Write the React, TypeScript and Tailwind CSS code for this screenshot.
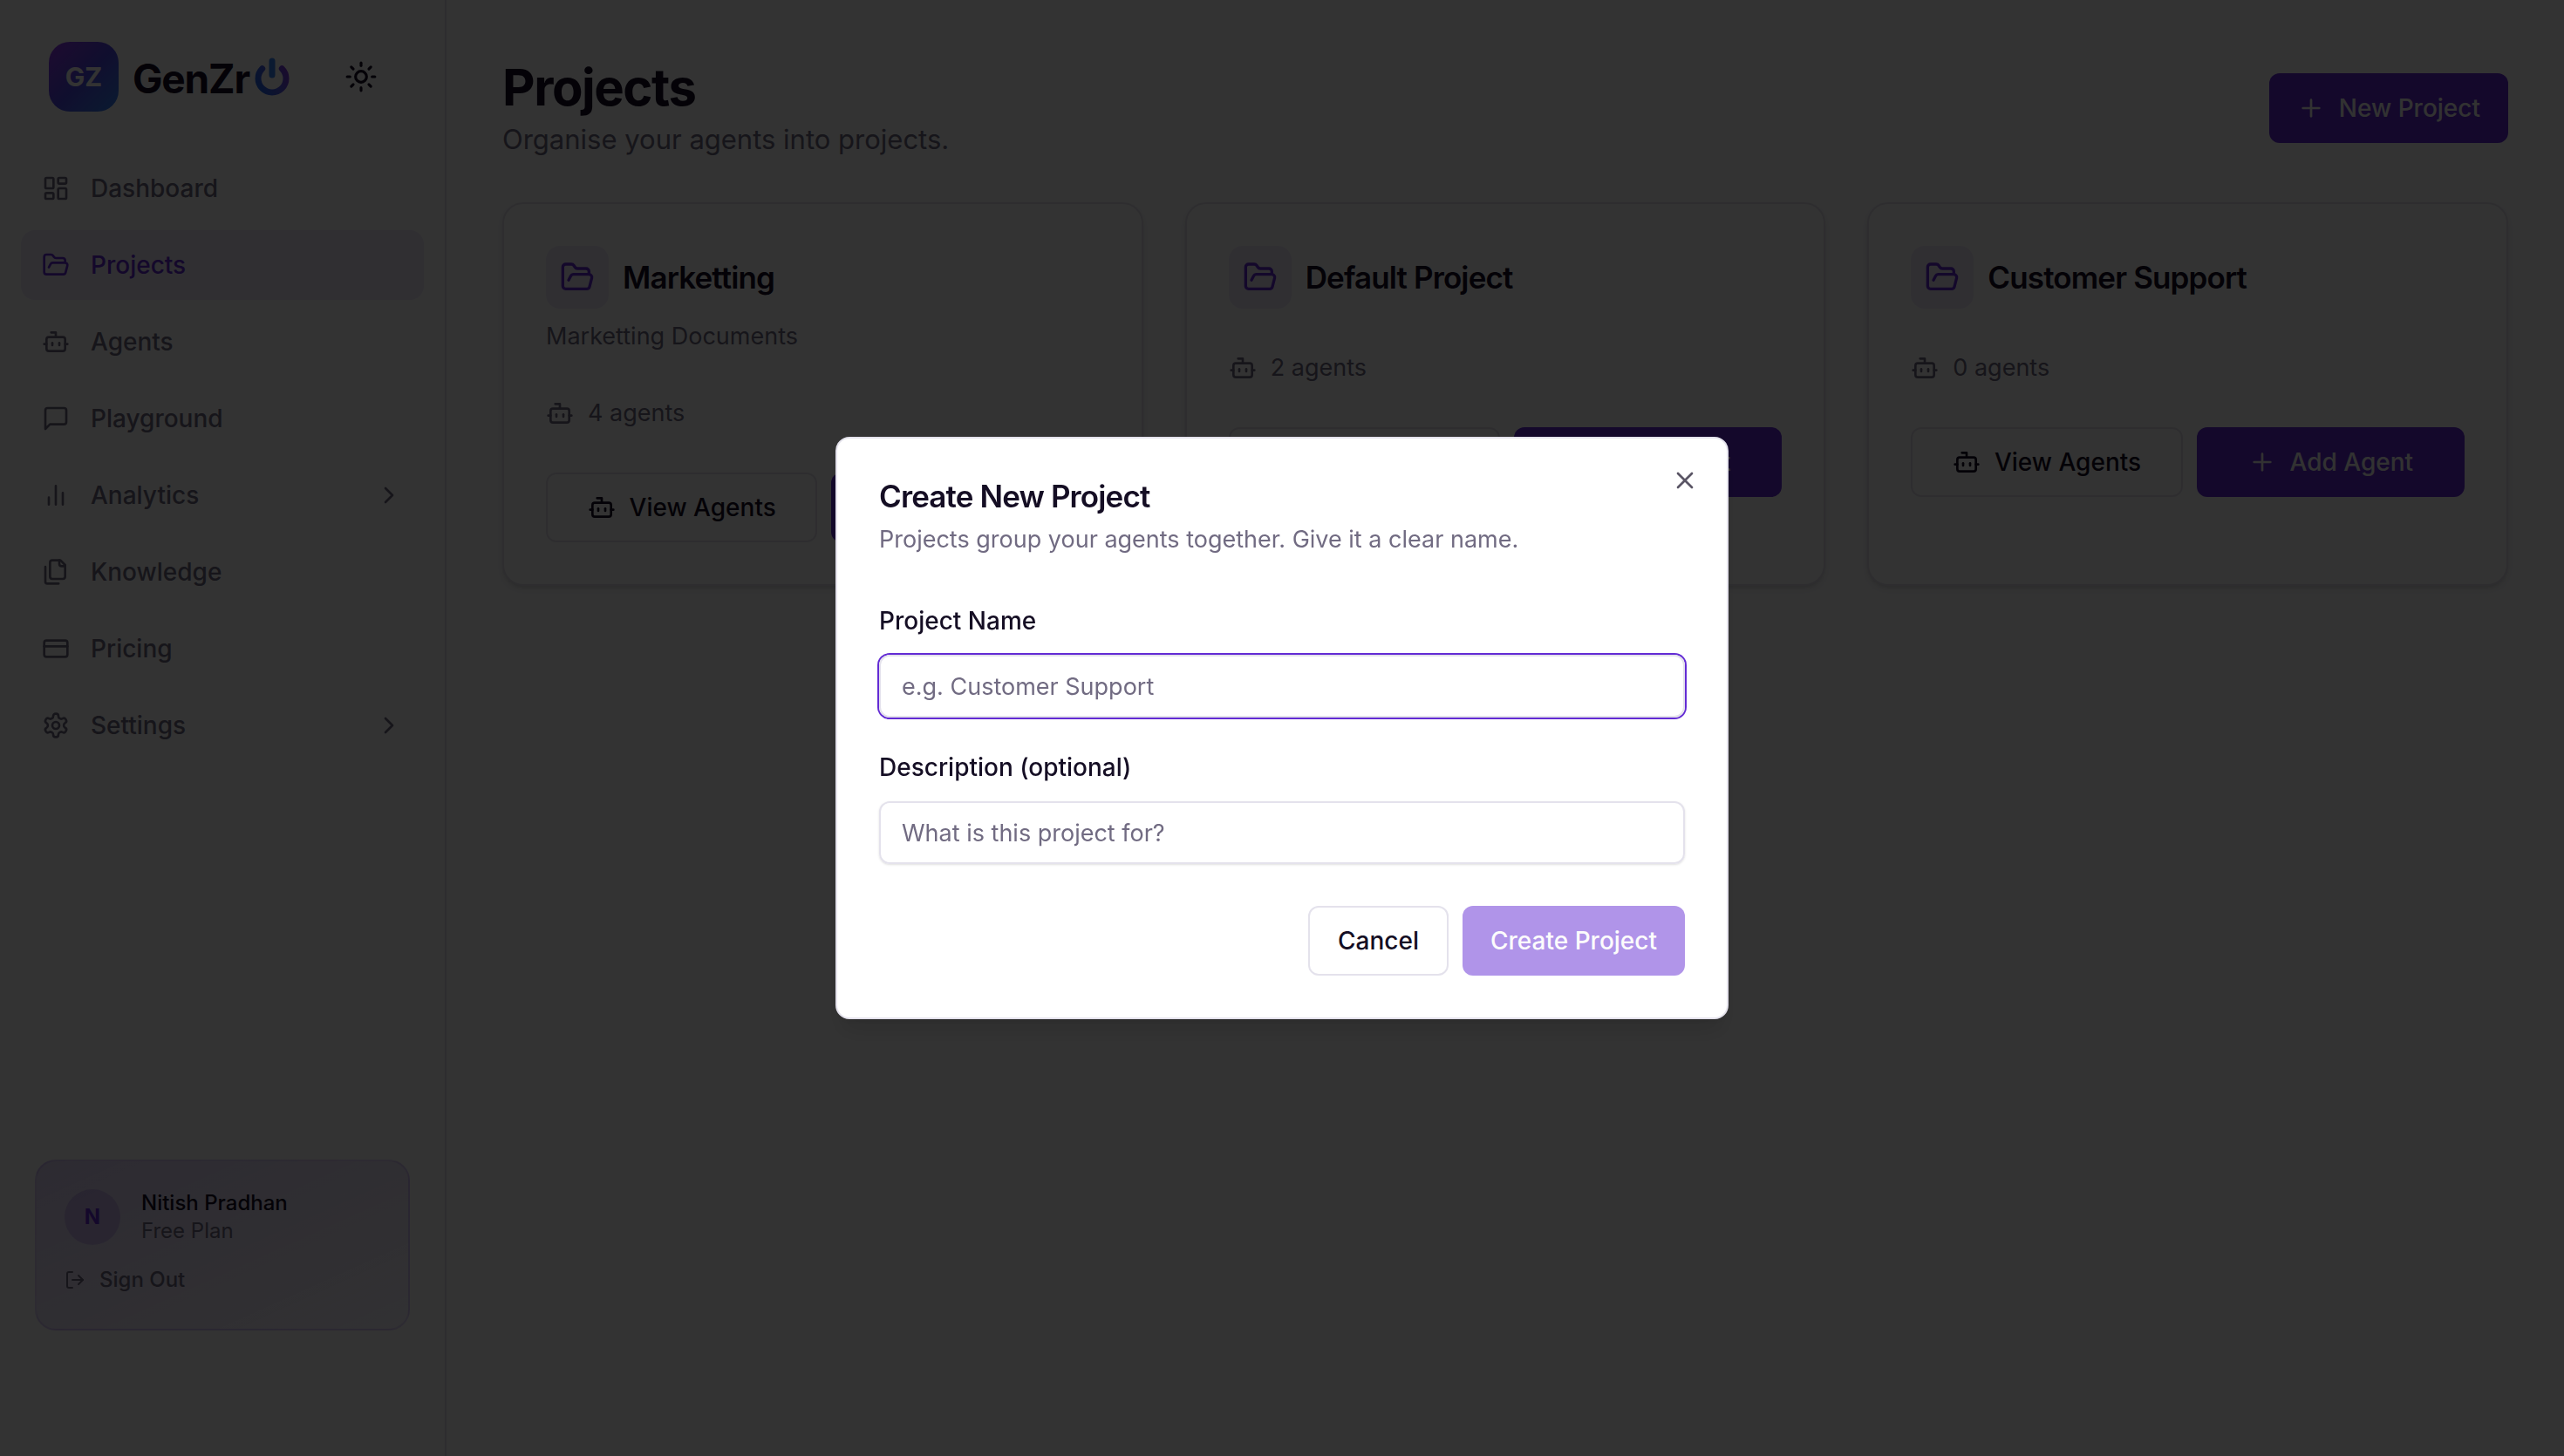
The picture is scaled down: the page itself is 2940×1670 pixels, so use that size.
import { useState } from 'react';
import type { ReactNode } from 'react';
import {
    Bot,
    ChevronRight,
    CreditCard,
    FolderOpen,
    LayoutDashboard,
    LogOut,
    Plus,
    Sun,
    X,
} from 'lucide-react';

const iconProps = {
    viewBox: '0 0 24 24',
    fill: 'none',
    stroke: 'currentColor',
    strokeWidth: 2,
    strokeLinecap: 'round' as const,
    strokeLinejoin: 'round' as const,
    'aria-hidden': true,
};

function ChatIcon({ className }: { className?: string }) {
    return (
        <svg {...iconProps} className={className}>
            <path d="M21 15a2 2 0 0 1-2 2H7l-4 4V5a2 2 0 0 1 2-2h14a2 2 0 0 1 2 2z" />
        </svg>
    );
}

function BarsIcon({ className }: { className?: string }) {
    return (
        <svg {...iconProps} className={className}>
            <path d="M18 20V10M12 20V4M6 20v-6" />
        </svg>
    );
}

function FilesIcon({ className }: { className?: string }) {
    return (
        <svg {...iconProps} className={className}>
            <path d="M20 7h-3a2 2 0 0 1-2-2V2" />
            <path d="M9 18a2 2 0 0 1-2-2V4a2 2 0 0 1 2-2h7l4 4v10a2 2 0 0 1-2 2Z" />
            <path d="M3 7.6v12.8A1.6 1.6 0 0 0 4.6 22h9.8" />
        </svg>
    );
}

function GearIcon({ className }: { className?: string }) {
    return (
        <svg {...iconProps} className={className}>
            <path d="M12.22 2h-.44a2 2 0 0 0-2 2v.18a2 2 0 0 1-1 1.73l-.43.25a2 2 0 0 1-2 0l-.15-.08a2 2 0 0 0-2.73.73l-.22.38a2 2 0 0 0 .73 2.73l.15.1a2 2 0 0 1 1 1.72v.51a2 2 0 0 1-1 1.74l-.15.09a2 2 0 0 0-.73 2.73l.22.38a2 2 0 0 0 2.73.73l.15-.08a2 2 0 0 1 2 0l.43.25a2 2 0 0 1 1 1.73V20a2 2 0 0 0 2 2h.44a2 2 0 0 0 2-2v-.18a2 2 0 0 1 1-1.73l.43-.25a2 2 0 0 1 2 0l.15.08a2 2 0 0 0 2.73-.73l.22-.39a2 2 0 0 0-.73-2.73l-.15-.08a2 2 0 0 1-1-1.74v-.5a2 2 0 0 1 1-1.74l.15-.09a2 2 0 0 0 .73-2.73l-.22-.38a2 2 0 0 0-2.73-.73l-.15.08a2 2 0 0 1-2 0l-.43-.25a2 2 0 0 1-1-1.73V4a2 2 0 0 0-2-2z" />
            <circle cx="12" cy="12" r="3" />
        </svg>
    );
}

// The last "o" of the wordmark
function PowerMark() {
    return (
        <svg viewBox="0 0 40 44" fill="none" strokeWidth="7" strokeLinecap="round" className="h-11 w-10" aria-hidden>
            <defs>
                <linearGradient id="ring" x1="36" y1="14" x2="4" y2="30" gradientUnits="userSpaceOnUse">
                    <stop offset="0" stopColor="#7e3ae0" />
                    <stop offset="0.5" stopColor="#4f5ae5" />
                    <stop offset="1" stopColor="#2563eb" />
                </linearGradient>
            </defs>
            <path d="M8.7 12.7A16 16 0 1 0 31.3 12.7" stroke="url(#ring)" />
            <path d="M20 4V20" stroke="#3b82f6" />
        </svg>
    );
}

const navItems = [
    { label: 'Dashboard', icon: LayoutDashboard },
    { label: 'Projects', icon: FolderOpen, active: true },
    { label: 'Agents', icon: Bot },
    { label: 'Playground', icon: ChatIcon },
    { label: 'Analytics', icon: BarsIcon, nested: true },
    { label: 'Knowledge', icon: FilesIcon },
    { label: 'Pricing', icon: CreditCard },
    { label: 'Settings', icon: GearIcon, nested: true },
];

const projects = [
    { name: 'Marketting', description: 'Marketting Documents', agents: 4 },
    { name: 'Default Project', description: '', agents: 2 },
    { name: 'Customer Support', description: '', agents: 0 },
];

const buttonBase =
    'inline-flex h-20 items-center justify-center gap-4 rounded-xl px-8 text-[28px] leading-10 font-medium whitespace-nowrap';

function PrimaryButton({ children, className = '', disabled }: { children: ReactNode; className?: string; disabled?: boolean }) {
    return (
        <button disabled={disabled} className={`${buttonBase} bg-[#632bd4] text-[#fafafa] disabled:opacity-50 ${className}`}>
            {children}
        </button>
    );
}

function OutlineButton({ children, className = '', onClick }: { children: ReactNode; className?: string; onClick?: () => void }) {
    return (
        <button
            type="button"
            onClick={onClick}
            className={`${buttonBase} border-2 border-[#e4e2ec] bg-white text-[#150e24] ${className}`}
        >
            {children}
        </button>
    );
}

function Sidebar() {
    return (
        <aside className="flex w-[512px] shrink-0 flex-col border-r-2 border-[#e4e2ec] bg-white pb-36">
            <div className="flex items-center justify-between py-12 pr-[77px] pl-14">
                <a href="#" className="flex items-center gap-4">
                    <span className="flex size-20 items-center justify-center rounded-3xl bg-linear-to-br from-[#9333ea] via-[#4f46e5] to-[#2b84f0] text-[30px] font-bold text-white">
                        GZ
                    </span>
                    <span className="flex items-end gap-1.5 text-[46px] leading-10 font-bold tracking-tight text-[#150e24]">
                        GenZr
                        <PowerMark />
                    </span>
                </a>
                <button aria-label="Toggle theme" className="text-[#150e24]">
                    <Sun className="size-[38px]" />
                </button>
            </div>

            <nav className="flex flex-col gap-2 px-6">
                {navItems.map(({ label, icon: Icon, active, nested }) => (
                    <a
                        key={label}
                        href="#"
                        className={`flex h-20 items-center gap-6 rounded-2xl px-6 text-[28px] font-medium ${
                            active ? 'bg-[#632bd4]/10 text-[#632bd4]' : 'text-[#716b82]'
                        }`}
                    >
                        <Icon className="size-8" />
                        <span className="flex-1">{label}</span>
                        {nested && <ChevronRight className="size-8" />}
                    </a>
                ))}
            </nav>

            {/* Account */}
            <div className="mx-10 mt-auto rounded-3xl border-2 border-[#632bd4]/15 bg-linear-to-br from-[#632bd4]/20 to-[#632bd4]/5 p-8">
                <div className="flex items-center gap-6">
                    <div className="flex size-16 items-center justify-center rounded-full bg-[#632bd4]/20 text-[24px] font-bold text-[#632bd4]">
                        N
                    </div>
                    <div className="text-[24px] leading-8">
                        <p className="font-medium text-[#150e24]">Nitish Pradhan</p>
                        <p className="text-[#716b82]">Free Plan</p>
                    </div>
                </div>
                <button className="mt-4 flex h-12 items-center gap-4 text-[24px] font-medium text-[#716b82]">
                    <LogOut className="size-6" />
                    Sign Out
                </button>
            </div>
        </aside>
    );
}

function ProjectCard({ name, description, agents }: (typeof projects)[number]) {
    return (
        <article className="rounded-3xl border-2 border-[#e4e2ec] bg-white p-12 shadow-md">
            <div className="flex items-center gap-4">
                <div className="rounded-2xl bg-[#632bd4]/10 p-4 text-[#632bd4]">
                    <FolderOpen className="size-10" />
                </div>
                <h2 className="text-[35px] leading-9 font-semibold tracking-tight text-[#150e24]">{name}</h2>
            </div>
            {description && <p className="mt-3 text-[27px] leading-10 text-[#716b82]">{description}</p>}
            <div className="mt-12 flex items-center gap-4 text-[27px] leading-10 text-[#716b82]">
                <Bot className="size-8" />
                {`${agents} agents`}
            </div>
            <div className="mt-12 flex gap-4">
                <OutlineButton className="flex-1">
                    <Bot className="size-8" />
                    View Agents
                </OutlineButton>
                <PrimaryButton className="flex-1">
                    <Plus className="size-8" />
                    Add Agent
                </PrimaryButton>
            </div>
        </article>
    );
}

type FieldProps = {
    id: string;
    label: string;
    placeholder: string;
    value: string;
    onChange: (value: string) => void;
    autoFocus?: boolean;
};

function Field({ id, label, onChange, ...rest }: FieldProps) {
    return (
        <div className="flex flex-col gap-4">
            <div className="text-[32px] leading-[48px]">
                <label htmlFor={id} className="text-[28px] leading-7 font-medium">
                    {label}
                </label>
            </div>
            <input
                id={id}
                {...rest}
                onChange={(e) => onChange(e.target.value)}
                className="h-18 w-full rounded-xl border-2 border-[#e4e2ec] bg-transparent px-6 text-[27px] leading-10 caret-transparent shadow-sm outline-none placeholder:text-[#716b82] focus:ring-2 focus:ring-[#632bd4]"
            />
        </div>
    );
}

function CreateProjectDialog({ onClose }: { onClose: () => void }) {
    const [name, setName] = useState('');
    const [description, setDescription] = useState('');

    return (
        <div className="fixed inset-0 z-50 flex items-center justify-center bg-black/80">
            <div
                role="dialog"
                aria-modal="true"
                aria-labelledby="dialog-title"
                className="relative flex w-full max-w-5xl flex-col gap-8 rounded-2xl border-2 border-[#e4e2ec] bg-white p-12 text-[#150e24] shadow-xl"
            >
                <div className="flex flex-col gap-3">
                    <h2 id="dialog-title" className="text-[35px] leading-9 font-semibold tracking-tight">
                        Create New Project
                    </h2>
                    <p className="text-[27px] leading-10 text-[#716b82]">
                        Projects group your agents together. Give it a clear name.
                    </p>
                </div>
                <div className="flex flex-col gap-8 py-4">
                    <Field
                        id="project-name"
                        label="Project Name"
                        placeholder="e.g. Customer Support"
                        value={name}
                        onChange={setName}
                        autoFocus
                    />
                    <Field
                        id="project-description"
                        label="Description (optional)"
                        placeholder="What is this project for?"
                        value={description}
                        onChange={setDescription}
                    />
                </div>
                <div className="flex justify-end gap-4">
                    <OutlineButton onClick={onClose}>Cancel</OutlineButton>
                    <PrimaryButton disabled={!name.trim()}>Create Project</PrimaryButton>
                </div>
                <button type="button" aria-label="Close" onClick={onClose} className="absolute top-8 right-8 opacity-70">
                    <X className="size-8" />
                </button>
            </div>
        </div>
    );
}

export default function App() {
    const [open, setOpen] = useState(true);

    return (
        <div className="flex min-h-screen bg-[#fcfcfd] font-['Inter',sans-serif] text-[#150e24]">
            <Sidebar />
            <main className="flex-1 p-16">
                <header className="flex items-center justify-between">
                    <div>
                        <h1 className="text-[58px] leading-[72px] font-bold tracking-tight">Projects</h1>
                        <p className="text-[31px] leading-[48px] text-[#716b82]">Organise your agents into projects.</p>
                    </div>
                    <PrimaryButton>
                        <Plus className="size-8" />
                        New Project
                    </PrimaryButton>
                </header>
                <section className="mt-12 grid grid-cols-3 gap-12">
                    {projects.map((project) => (
                        <ProjectCard key={project.name} {...project} />
                    ))}
                </section>
            </main>
            {open && <CreateProjectDialog onClose={() => setOpen(false)} />}
        </div>
    );
}
